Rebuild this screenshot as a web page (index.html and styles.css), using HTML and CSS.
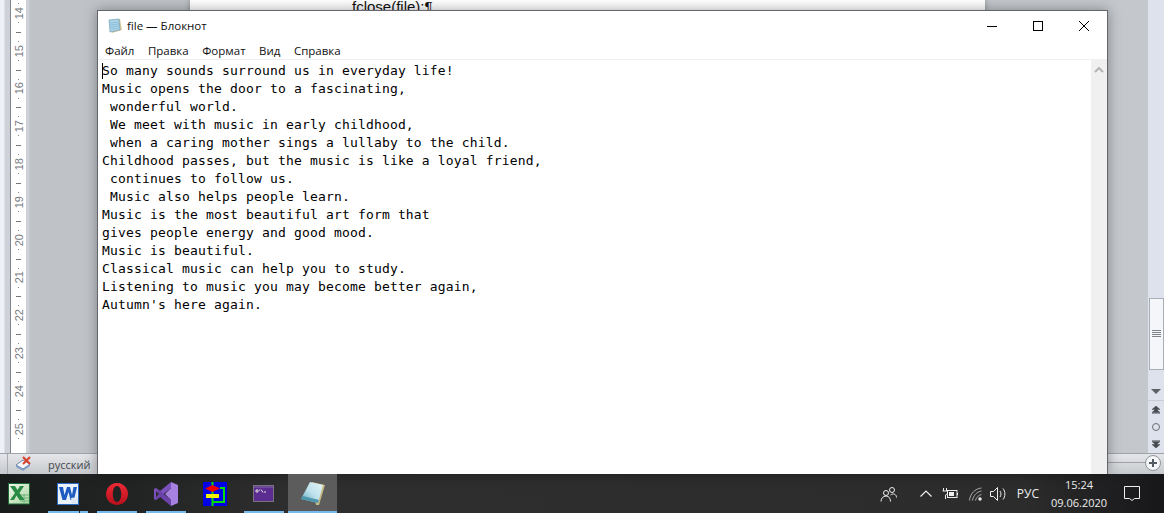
FILE: index.html
```html
<!DOCTYPE html>
<html lang="en">
<head>
  <meta charset="UTF-8">
  <title>file — Блокнот</title>
  <link rel="stylesheet" href="styles.css">
</head>
<body>
<div class="desktop">
  <div class="word">
    <div class="word-main">
      <div class="side-strip"></div>
      <div class="ruler">
        <div class="cm first"><span class="num">14</span></div>
        <div class="cm"><span class="num">15</span></div>
        <div class="cm"><span class="num">16</span></div>
        <div class="cm"><span class="num">17</span></div>
        <div class="cm"><span class="num">18</span></div>
        <div class="cm"><span class="num">19</span></div>
        <div class="cm"><span class="num">20</span></div>
        <div class="cm"><span class="num">21</span></div>
        <div class="cm"><span class="num">22</span></div>
        <div class="cm"><span class="num">23</span></div>
        <div class="cm"><span class="num">24</span></div>
        <div class="cm"><span class="num">25</span></div>
      </div>
      <div class="workspace">
        <div class="page"><span class="code-line">fclose(file);¶</span></div>
      </div>
      <div class="word-scroll">
        <div class="word-thumb">
          <svg width="9" height="8" viewBox="0 0 9 8"><path d="M0 .5h9M0 2.5h9M0 4.5h9M0 6.5h9" stroke="#7d8288"/></svg>
        </div>
        <svg class="scroll-down" width="10" height="6" viewBox="0 0 10 6"><path d="M0 0h10L5 5z" fill="#5c6066"/></svg>
        <div class="browse">
          <svg width="8" height="8" viewBox="0 0 8 8"><path d="M0 7.500h8M0 3.500L4 0l4 3.500zM0 6.500L4 3l4 3.500z" fill="#44484e" stroke="#44484e" stroke-width=".5"/></svg>
          <span class="browse-dot"></span>
          <svg width="8" height="8" viewBox="0 0 8 8"><path d="M0 .5h8M0 1.500l4 3.500 4-3.500zM0 4.500L4 8l4-3.500z" fill="#44484e" stroke="#44484e" stroke-width=".5"/></svg>
        </div>
      </div>
    </div>
    <div class="word-status">
      <span class="status-div"></span>
      <svg class="spell" width="18" height="16" viewBox="0 0 18 16">
        <path d="M1 9l7-5 7 4-7 5z" fill="#f4f6f8" stroke="#6f87a8"/>
        <path d="M1 9v2l7 4 7-5V8l-7 5z" fill="#7f9fc6"/>
        <path d="M8 1l7 7M15 1L8 8" stroke="#d8402c" stroke-width="2"/>
      </svg>
      <span class="lang">русский</span>
      <span class="zoom-line"></span>
      <span class="zoom-plus">
        <svg width="10" height="10" viewBox="0 0 10 10"><path d="M5 1v8M1 5h8" stroke="#555b62" stroke-width="2"/></svg>
      </span>
    </div>
  </div>

  <div class="notepad">
    <div class="np-title">
      <svg class="np-icon" width="16" height="16" viewBox="0 0 16 16">
        <path d="M3 3l10-2 2 11-10 3z" fill="#d9c99a"/>
        <path d="M2 2l10-1 1 11-10 2z" fill="#a9d4ea" stroke="#6b95ad" stroke-width=".6"/>
        <path d="M3 5l9-1M3 7l9-1M3 9l9-1M4 11l8-1" stroke="#7fb2cc" stroke-width=".6"/>
      </svg>
      <span class="np-name">file — Блокнот</span>
      <div class="np-controls">
        <span class="np-btn"><svg width="10" height="10" viewBox="0 0 10 10"><path d="M0 5.500h10" stroke="#000"/></svg></span>
        <span class="np-btn"><svg width="10" height="10" viewBox="0 0 10 10"><rect x=".5" y=".5" width="9" height="9" fill="none" stroke="#000"/></svg></span>
        <span class="np-btn"><svg width="10" height="10" viewBox="0 0 10 10"><path d="M0 0l10 10M10 0L0 10" stroke="#000"/></svg></span>
      </div>
    </div>
    <div class="np-menu">
      <span>Файл</span>
      <span>Правка</span>
      <span>Формат</span>
      <span>Вид</span>
      <span>Справка</span>
    </div>
    <div class="np-body">
      <pre class="np-text"><span class="caret"></span>So many sounds surround us in everyday life!
Music opens the door to a fascinating,
 wonderful world.
 We meet with music in early childhood,
 when a caring mother sings a lullaby to the child.
Childhood passes, but the music is like a loyal friend,
 continues to follow us.
 Music also helps people learn.
Music is the most beautiful art form that
gives people energy and good mood.
Music is beautiful.
Classical music can help you to study.
Listening to music you may become better again,
Autumn's here again.</pre>
      <div class="np-scroll">
        <svg width="10" height="6" viewBox="0 0 10 6"><path d="M1 5l4-4 4 4" fill="none" stroke="#b4b4b4" stroke-width="2"/></svg>
      </div>
    </div>
  </div>
</div>

<div class="taskbar">
  <div class="tb-apps">
    <div class="tb-app">
      <svg width="22" height="22" viewBox="0 0 22 22">
        <defs><linearGradient id="xl" x1="0" y1="0" x2="1" y2="1"><stop offset="0" stop-color="#f2f8ee"/><stop offset="1" stop-color="#a9d6a0"/></linearGradient></defs>
        <rect x=".5" y=".5" width="21" height="20.500" fill="url(#xl)" stroke="#1c6b36"/>
        <path d="M12 12h9M12 15h9M12 18h9M16 11v10" stroke="#6fb07c"/>
        <path d="M2 3h5l2.500 4L12 3h4l-4.500 7 5 7h-5l-3-4.500L6 17H2l5-7z" fill="#2a8c44"/>
      </svg>
    </div>
    <div class="tb-app on multi">
      <svg width="22" height="22" viewBox="0 0 22 22">
        <rect x=".5" y=".5" width="21" height="21" fill="#eaf1fb" stroke="#2a6cc4"/>
        <path d="M2 4h4l1.500 8L10 4h3l2 8 1.500-8H20l-3 13h-3.500L11.500 9 9 17H5.500z" fill="#1c5cc0"/>
        <path d="M14 15l7-1v7h-6z" fill="#dfe7f2"/>
      </svg>
    </div>
    <div class="tb-app on">
      <svg width="22" height="22" viewBox="0 0 22 22">
        <defs><linearGradient id="op" x1="0" y1="0" x2="0" y2="1"><stop offset="0" stop-color="#ee2a35"/><stop offset="1" stop-color="#b80f1c"/></linearGradient></defs>
        <path d="M11 0a11 11 0 1 0 .01 0zM11 3c2.500 0 4.200 3.500 4.200 8s-1.700 8-4.200 8-4.200-3.500-4.200-8S8.500 3 11 3z" fill="url(#op)" fill-rule="evenodd"/>
      </svg>
    </div>
    <div class="tb-app on">
      <svg width="24" height="24" viewBox="0 0 24 24">
        <path d="M17 0l7 3v18l-7 3zM17 6v12l-6-6z" fill="#a681e0" fill-rule="evenodd"/>
        <path d="M17 0v6L6 15l-4 3-2-1V7l2-1 4 3z" fill="#7b52bd"/>
        <path d="M17 24v-6L6 9l-4-3 3 6-5 5 2 1 4-3z" fill="#6a42a8"/>
        <path d="M2 9l3 3-3 3z" fill="#2b2b2b"/>
      </svg>
    </div>
    <div class="tb-app">
      <svg width="24" height="24" viewBox="0 0 24 24">
        <rect width="24" height="24" fill="#0000e6"/>
        <path d="M9.500 0v24M17 6h4v14H9.500" fill="none" stroke="#00e000" stroke-width="2"/>
        <path d="M2 6.500L9.500 3 17 6.500 9.500 10z" fill="#f00000"/>
        <rect x="3" y="12" width="13" height="4" fill="#f5f000"/>
      </svg>
    </div>
    <div class="tb-app on">
      <svg width="21" height="17" viewBox="0 0 21 17">
        <rect x=".5" y=".5" width="20" height="16" fill="#5c2d91" stroke="#77727f"/>
        <path d="M1 1h19v2H1z" fill="#6d4a9a"/>
        <path d="M3 5h2v2H3zM6 5h1M8 4.500l2 3M11 7h2" stroke="#ddd" fill="none"/>
      </svg>
    </div>
    <div class="tb-app active">
      <svg width="24" height="24" viewBox="0 0 24 24">
        <defs><linearGradient id="np" x1="0" y1="1" x2="1" y2="0"><stop offset="0" stop-color="#5fa9bd"/><stop offset=".5" stop-color="#bfe3ec"/><stop offset="1" stop-color="#e6f5f8"/></linearGradient></defs>
        <path d="M11 0l13 3-6 20-3 0z" fill="#c9b982"/>
        <path d="M9 0l13 3-5 18L0 17z" fill="url(#np)"/>
        <path d="M0 17l17 4 1-3L2 14z" fill="#4f97ac"/>
      </svg>
    </div>
  </div>
  <div class="tray">
    <svg class="tray-people" width="17" height="16" viewBox="0 0 17 16" fill="none" stroke="#eee">
      <circle cx="12" cy="4" r="2.500"/><circle cx="6" cy="7" r="2.500"/>
      <path d="M1 15.500c0-3 2-5.500 5-5.500s4.500 2.500 4.500 5.500M10.500 9c2.500-2 6-1 6 2.500"/>
    </svg>
    <svg class="tray-caret" width="12" height="7" viewBox="0 0 12 7"><path d="M.5 6.500L6 1l5.500 5.500" fill="none" stroke="#eee" stroke-width="1.200"/></svg>
    <svg class="tray-batt" width="16" height="11" viewBox="0 0 16 11" fill="none" stroke="#eee">
      <path d="M1.500 0v3M4.500 0v3M.5 3h5v2.500l-2 1.500v4"/><rect x="5.500" y="2.500" width="9.500" height="7"/><rect x="7" y="4" width="5" height="4" fill="#eee" stroke="none"/><path d="M15.500 5v2"/>
    </svg>
    <svg class="tray-wifi" width="13" height="14" viewBox="0 0 13 14" fill="none" stroke="#aaa">
      <path d="M.5 13.500C1 7 6 1.500 12.500 1M3.500 13.500C4 9 8 4.500 12.500 4M6.500 13.500C7 11 9.500 8 12.500 7.500"/><circle cx="11" cy="12" r="1.700" fill="#eee" stroke="none"/>
    </svg>
    <svg class="tray-vol" width="16" height="14" viewBox="0 0 16 14" fill="none" stroke="#eee">
      <path d="M.5 4.500h3l4-4v13l-4-4h-3zM10 4c1.300 2 1.300 4 0 6M13 1.500c2.500 3 2.500 8 0 11"/>
    </svg>
    <span class="tray-lang">РУС</span>
    <div class="clock"><span>15:24</span><span>09.06.2020</span></div>
    <svg class="tray-note" width="16" height="15" viewBox="0 0 16 15"><path d="M.5.500h15v12h-5l-2.500 2-2.500-2h-5z" fill="none" stroke="#eee"/></svg>
  </div>
</div>
</body>
</html>
```

FILE: styles.css
```css
* {
  box-sizing: border-box;
}
html, body {
  margin: 0;
  height: 513px;
  overflow: hidden;
}
body {
  display: flex;
  flex-direction: column;
  width: 1164px;
  font-family: "Open Sans", "Noto Sans", sans-serif;
}
.desktop {
  position: relative;
  flex: 1;
  min-height: 0;
}
.word {
  display: flex;
  flex-direction: column;
  height: 100%;
}
.word-main {
  display: flex;
  flex: 1;
  min-height: 0;
}
.side-strip {
  width: 11px;
  background: linear-gradient(to right, #eef1f6 0, #eef1f6 4px, #ced2d8 5px, #ced2d8 10px, #7f858e 10px);
}
.ruler {
  width: 15px;
  overflow: hidden;
  background: #fff;
  display: flex;
  flex-direction: column;
}
.cm {
  height: 37.8px;
  flex: none;
  display: flex;
  align-items: center;
  justify-content: center;
  background:
    linear-gradient(#777, #777) center 0 / 5px 1px no-repeat,
    linear-gradient(#888, #888) center 9px / 1px 1px no-repeat,
    linear-gradient(#888, #888) center 28px / 1px 1px no-repeat;
}
.cm.first {
  margin-top: -6px;
}
.num {
  writing-mode: vertical-rl;
  transform: rotate(180deg);
  background: #fff;
  font-size: 11px;
  line-height: 12px;
  color: #777b80;
  font-family: "Liberation Sans", sans-serif;
}
.workspace {
  flex: 1;
  background: linear-gradient(to right, #cdd1d5 0, #cdd1d5 3px, #bfc3c7 4px, #bfc3c7 40%, #c4c8cc 100%);
  padding-left: 164px;
  padding-right: 163px;
}
.page {
  height: 100%;
  background: #fff;
  overflow: hidden;
  padding-left: 162px;
  box-shadow: 0 0 6px rgba(0, 0, 0, 0.3);
}
.code-line {
  display: block;
  font-family: "Liberation Sans", sans-serif;
  font-size: 15px;
  line-height: 14px;
  color: #111;
}
.word-scroll {
  width: 16px;
  background: #dde2ec;
  padding-top: 298px;
  display: flex;
  flex-direction: column;
  align-items: center;
}
.word-thumb {
  width: 15px;
  height: 72px;
  flex: none;
  background: #f4f6f9;
  border: 1px solid #a9aeb6;
  display: flex;
  align-items: center;
  justify-content: center;
}
.scroll-down {
  margin-top: 19px;
  flex: none;
}
.browse {
  margin-top: 5px;
  border-top: 1px solid #c8ccd4;
  width: 100%;
  padding-top: 5px;
  display: flex;
  flex-direction: column;
  align-items: center;
  gap: 9px;
}
.browse-dot {
  width: 8px;
  height: 8px;
  border: 1px solid #6a6e74;
  border-radius: 50%;
}
.word-status {
  height: 21px;
  flex: none;
  display: flex;
  align-items: center;
  padding-left: 15px;
  border-top: 1px solid #9ea3a9;
  background: linear-gradient(#e4e6e9, #c6c9cd);
  position: relative;
}
.status-div {
  position: absolute;
  left: 7px;
  top: 0;
  bottom: 0;
  width: 1px;
  background: #a8acb2;
}
.spell {
  flex: none;
}
.lang {
  margin-left: 15px;
  font-size: 11px;
  color: #44484e;
}
.zoom-line {
  position: absolute;
  right: 10px;
  top: 8px;
  width: 60px;
  height: 1px;
  background: #9ea3a9;
}
.zoom-plus {
  position: absolute;
  right: 3px;
  top: 1px;
  width: 16px;
  height: 16px;
  border-radius: 50%;
  background: #f4f5f7;
  border: 1px solid #8f949b;
  display: flex;
  align-items: center;
  justify-content: center;
}
.notepad {
  position: absolute;
  left: 97px;
  top: 10px;
  width: 1011px;
  height: 464px;
  background: #fff;
  border: 1px solid #63676d;
  border-bottom: 0;
  box-shadow: 0 0 12px rgba(0, 0, 0, 0.35);
  display: flex;
  flex-direction: column;
}
.np-title {
  height: 29px;
  flex: none;
  display: flex;
  align-items: center;
  padding-left: 9px;
}
.np-icon {
  flex: none;
}
.np-name {
  margin-left: 4px;
  font-size: 11.5px;
  color: #111;
}
.np-controls {
  margin-left: auto;
  display: flex;
}
.np-btn {
  width: 46px;
  height: 29px;
  display: flex;
  align-items: center;
  justify-content: center;
}
.np-menu {
  height: 19px;
  flex: none;
  display: flex;
  gap: 13.5px;
  padding-left: 7px;
  font-size: 11.5px;
  line-height: 22px;
  color: #111;
}
.np-body {
  flex: 1;
  min-height: 0;
  display: flex;
  border-top: 1px solid #f0f0f0;
}
.np-text {
  flex: 1;
  margin: 0;
  padding: 2px 0 0 4px;
  font-family: "DejaVu Sans Mono", monospace;
  font-size: 13px;
  letter-spacing: 0.17px;
  line-height: 18px;
  color: #000;
  position: relative;
}
.caret {
  position: absolute;
  left: 4px;
  top: 3px;
  width: 1px;
  height: 16px;
  background: #000;
}
.np-scroll {
  width: 16px;
  background: #f0f0f0;
  display: flex;
  justify-content: center;
  padding-top: 7px;
}
.taskbar {
  height: 39px;
  flex: none;
  display: flex;
  background: linear-gradient(to right, #181c1a 0, #2e2e2e 25%, #2c2c2c 88%, #17171a 100%);
}
.tb-apps {
  display: flex;
  margin-left: -6px;
}
.tb-app {
  width: 49px;
  height: 39px;
  display: flex;
  align-items: center;
  justify-content: center;
  position: relative;
}
.tb-app.on::after {
  content: "";
  position: absolute;
  left: 5px;
  right: 4px;
  bottom: 0;
  height: 2px;
  background: #76b9ed;
}
.tb-app.multi::after {
  background: linear-gradient(to right, #76b9ed 31px, transparent 31px, transparent 32px, #76b9ed 32px);
}
.tb-app.active {
  background: #5c5c5c;
}
.tb-app.active::after {
  content: "";
  position: absolute;
  left: 0;
  right: 0;
  bottom: 0;
  height: 2px;
  background: #76b9ed;
}
.tray {
  margin-left: auto;
  display: flex;
  align-items: center;
  padding-right: 24px;
  color: #eee;
  font-size: 12px;
}
.tray-caret {
  margin-left: 23px;
}
.tray-batt {
  margin-left: 10px;
}
.tray-wifi {
  margin-left: 11px;
}
.tray-vol {
  margin-left: 8px;
}
.tray-lang {
  margin-left: 11px;
}
.clock {
  margin-left: 9px;
  width: 62px;
  display: flex;
  flex-direction: column;
  align-items: center;
  font-size: 11px;
  line-height: 18px;
}
.tray-note {
  margin-left: 14px;
}
```
